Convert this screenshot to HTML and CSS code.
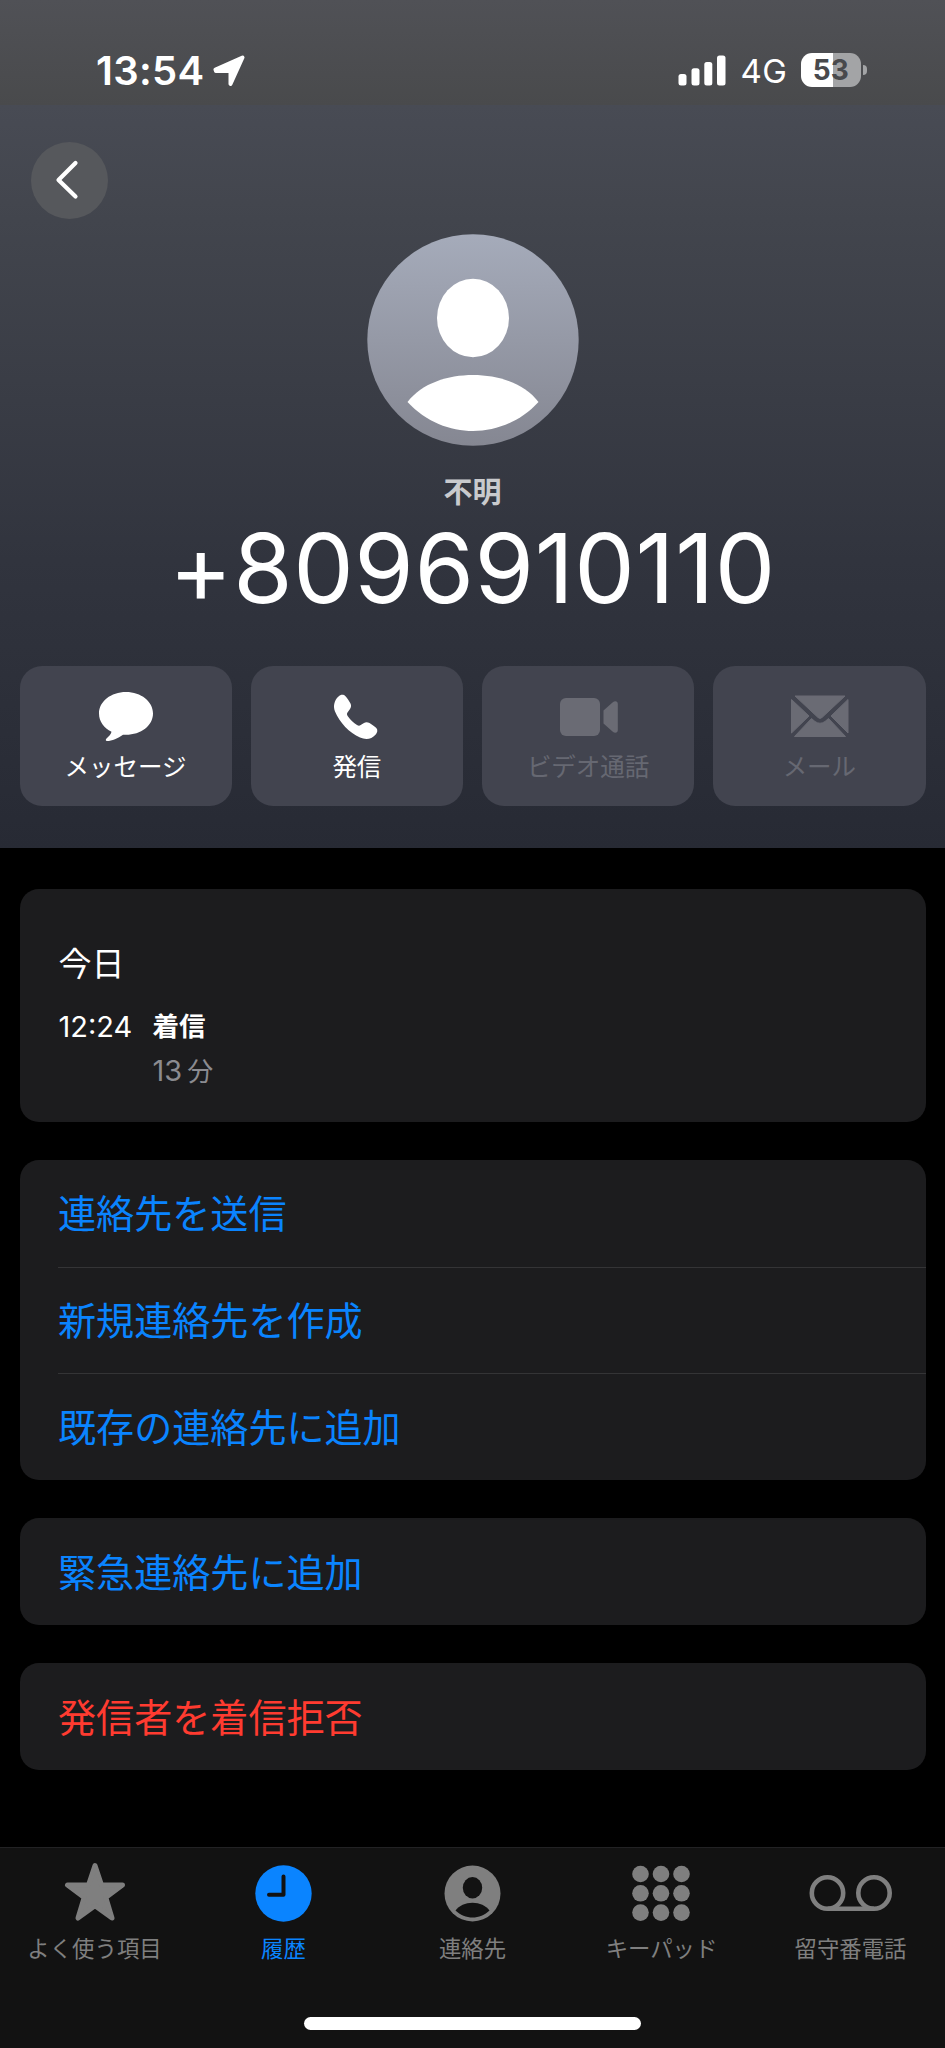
FILE: index.html
```html
<!DOCTYPE html>
<html lang="ja">
<head>
    <meta charset="UTF-8">
    <meta name="viewport" content="width=device-width, initial-scale=1.0">
    <title>履歴</title>
    <link rel="stylesheet" href="styles.css">
</head>
<body>

<div class="phone">
    <header class="hero">
        <div class="status-bar">
            <div class="status-left">
                <span class="clock">13:54</span>
                <svg class="location" width="33" height="32" viewBox="0 0 33 32">
                    <path d="M2.5 14.5 L29.5 2.5 L17.5 29 V16 H3 Z" fill="#fff" stroke="#fff" stroke-width="4" stroke-linejoin="round"/>
                </svg>
            </div>
            <div class="status-right">
                <svg class="signal" width="48" height="31" viewBox="0 0 48 31">
                    <rect x="0.5" y="19" width="8" height="11.5" rx="2.5" fill="#fff"/>
                    <rect x="13.5" y="13.3" width="8" height="17.2" rx="2.5" fill="#fff"/>
                    <rect x="26.3" y="7" width="8" height="23.5" rx="2.5" fill="#fff"/>
                    <rect x="39" y="0.5" width="8.5" height="30" rx="2.5" fill="#fff"/>
                </svg>
                <span class="network">4G</span>
                <div class="battery">53</div>
                <div class="battery-tip"></div>
            </div>
        </div>

        <button class="back">
            <svg width="24" height="40" viewBox="0 0 24 40">
                <path d="M20.5 3 L3.5 20 L20.5 36.5" fill="none" stroke="#fff" stroke-width="4.2" stroke-linecap="round" stroke-linejoin="round"/>
            </svg>
        </button>

        <div class="profile">
            <svg class="avatar" width="212" height="212" viewBox="0 0 212 212">
                <defs>
                    <linearGradient id="avatarFill" x1="0" y1="0" x2="0" y2="1">
                        <stop offset="0" stop-color="#a5abba"/>
                        <stop offset="1" stop-color="#858792"/>
                    </linearGradient>
                </defs>
                <circle cx="106" cy="106" r="105.7" fill="url(#avatarFill)"/>
                <ellipse cx="106" cy="84" rx="36" ry="39.3" fill="#fff"/>
                <path d="M40.5 168 C55 149 81 141 106 141 C131 141 157 149 171.5 168 C153 188 129 197 106 197 C83 197 59 188 40.5 168 Z" fill="#fff"/>
            </svg>
            <div class="name">不明</div>
            <h1 class="number">+8096910110</h1>
        </div>

        <div class="actions">
            <button class="action">
                <svg width="60" height="52" viewBox="0 0 60 52">
                    <path d="M30 1 C45 1 57 10.5 57 22.5 C57 34.5 45 43.8 30 43.8 L27 43.7 C22 47 16 50 11 50 C9.5 50 9.5 48.5 10.5 47.5 C13 45.5 15 43 15.5 40.8 C8 37 3 30.5 3 22.5 C3 10.5 15 1 30 1 Z" fill="#fff"/>
                </svg>
                <span>メッセージ</span>
            </button>
            <button class="action">
                <svg width="60" height="52" viewBox="1.5 0 60 52">
                    <path d="M13 5.5 C15 3.3 18 3 20 5.2 C22 7.6 24 10.5 25 12.5 C26 14.5 25.5 16.5 24.5 18 L22 21.5 C21 23 21.5 24 22.5 25.5 C25 29 28 32 31.5 34 C33 35 34 35 35.2 34 L38.5 32 C40 31 42 31 44 32 C46.5 33.5 49 35.2 50.8 37 C52.5 39 52 41.5 50 43.8 C46 48.5 40 49 34.5 46.5 C24 42 14 31.5 9.5 20.5 C7.5 15.5 8.5 9.5 13 5.5 Z" fill="#fff"/>
                </svg>
                <span>発信</span>
            </button>
            <button class="action disabled">
                <svg width="60" height="52" viewBox="-1.5 0 60 52">
                    <rect x="0.5" y="7" width="40" height="38" rx="6" fill="#6a6b74"/>
                    <path d="M44 19.5 L53 11.5 C55.5 9.5 58.3 10 58.3 13 V39 C58.3 42 55.5 42.5 53 40.5 L44 32.5 Z" fill="#6a6b74"/>
                </svg>
                <span>ビデオ通話</span>
            </button>
            <button class="action disabled">
                <svg width="60" height="52" viewBox="-1 0 60 52">
                    <path d="M5 5 H55 L32 26.5 Q30 28.3 28 26.5 Z M1.5 8.5 L19 25 L1.5 42 Z M58 8.5 L41 25 L58 42 Z M4.5 45.5 L21.5 27.5 L25 30.5 Q30 34 35 30.5 L38.5 27.5 L55.5 45.5 Z" fill="#6a6b74" stroke="#6a6b74" stroke-width="1" stroke-linejoin="round"/>
                </svg>
                <span>メール</span>
            </button>
        </div>
    </header>

    <main class="content">
        <section class="card history">
            <h2>今日</h2>
            <div class="call">
                <span class="call-time">12:24</span>
                <div>
                    <div class="call-type">着信</div>
                    <div class="call-length">13<span>分</span></div>
                </div>
            </div>
        </section>

        <section class="card list">
            <a class="row">連絡先を送信</a>
            <a class="row">新規連絡先を作成</a>
            <a class="row">既存の連絡先に追加</a>
        </section>

        <section class="card list">
            <a class="row">緊急連絡先に追加</a>
        </section>

        <section class="card list">
            <a class="row danger">発信者を着信拒否</a>
        </section>
    </main>

    <footer class="bottom">
        <nav class="tabs">
            <a class="tab">
                <svg width="64" height="60" viewBox="0 0 64 60">
                    <path d="M32 3.5 L38.5 23 H59.5 L42.8 35.5 L49 56 L32 43.8 L15 56 L21.2 35.5 L4.5 23 H25.5 Z" fill="currentColor" stroke="currentColor" stroke-width="5" stroke-linejoin="round"/>
                </svg>
                <span>よく使う項目</span>
            </a>
            <a class="tab active">
                <svg width="64" height="60" viewBox="0 0 64 60">
                    <circle cx="31.5" cy="31.5" r="28.2" fill="currentColor"/>
                    <path d="M31.5 14.5 V32.7 H17" fill="none" stroke="#121212" stroke-width="4" stroke-linecap="round" stroke-linejoin="round"/>
                </svg>
                <span>履歴</span>
            </a>
            <a class="tab">
                <svg width="64" height="60" viewBox="0 0 64 60">
                    <circle cx="31.5" cy="31.5" r="28" fill="currentColor"/>
                    <ellipse cx="31.5" cy="25.7" rx="9.7" ry="10.7" fill="#121212"/>
                    <path d="M14.5 48.5 C18 43.5 24.5 40.7 31.5 40.7 C38.5 40.7 45 43.5 48.5 48.5 C44 53 37.5 55.5 31.5 55.5 C25.5 55.5 19 53 14.5 48.5 Z" fill="#121212"/>
                </svg>
                <span>連絡先</span>
            </a>
            <a class="tab">
                <svg width="64" height="60" viewBox="1 0 64 60" fill="currentColor">
                    <circle cx="11.5" cy="12" r="8.3"/>
                    <circle cx="32" cy="12" r="8.3"/>
                    <circle cx="52.5" cy="12" r="8.3"/>
                    <circle cx="11.5" cy="31.3" r="8.3"/>
                    <circle cx="32" cy="31.3" r="8.3"/>
                    <circle cx="52.5" cy="31.3" r="8.3"/>
                    <circle cx="11.5" cy="50.6" r="8.3"/>
                    <circle cx="32" cy="50.6" r="8.3"/>
                    <circle cx="52.5" cy="50.6" r="8.3"/>
                </svg>
                <span>キーパッド</span>
            </a>
            <a class="tab">
                <svg width="84" height="60" viewBox="0 0 84 60" fill="none" stroke="currentColor" stroke-width="4.6">
                    <circle cx="18.5" cy="31" r="15.7"/>
                    <circle cx="65" cy="31" r="15.7"/>
                    <path d="M18.5 46.7 H65"/>
                </svg>
                <span>留守番電話</span>
            </a>
        </nav>
        <div class="home-indicator"></div>
    </footer>
</div>

</body>
</html>
```
FILE: styles.css
```css
* {
    box-sizing: border-box;
}
body {
    margin: 0;
    background-color: #000;
    color: #fff;
    font-family: Inter, "Noto Sans CJK JP", sans-serif;
}
.phone {
    width: 945px;
    height: 2048px;
    display: flex;
    flex-direction: column;
    overflow: hidden;
}
button {
    border: none;
    padding: 0;
    color: inherit;
    font-family: inherit;
}
svg {
    display: block;
}

/* header */
.hero {
    height: 848px;
    background: linear-gradient(#4d505b 0, #484b54 105px, #42454d 220px, #31343e 560px, #272a34 848px);
}
.status-bar {
    height: 105px;
    padding: 0 78px 0 96px;
    display: flex;
    justify-content: space-between;
    background: linear-gradient(#505156, #494a4c);
}
.status-left {
    display: flex;
    padding-top: 51px;
}
.clock {
    width: 117px;
    font-size: 40px;
    line-height: 40px;
    font-weight: 600;
    letter-spacing: 0.3px;
}
.location {
    margin-top: 4px;
}
.status-right {
    display: flex;
    padding-top: 53px;
}
.signal {
    margin-top: 2px;
}
.network {
    width: 60px;
    margin-left: 14.5px;
    font-size: 33px;
    line-height: 37px;
    font-weight: 400;
    letter-spacing: 0.5px;
}
.battery {
    width: 60.5px;
    height: 34px;
    border-radius: 11px;
    background: linear-gradient(90deg, #fff 32.5px, #a3a4a6 32.5px);
    color: #48494c;
    font-size: 28px;
    line-height: 35px;
    font-weight: 700;
    text-align: center;
}
.battery-tip {
    width: 4px;
    height: 10px;
    margin: 12px 0 0 2px;
    border-radius: 0 5px 5px 0;
    background-color: #a3a4a6;
}
.back {
    width: 77px;
    height: 77px;
    margin: 37px 0 0 31px;
    border-radius: 50%;
    background-color: #56585c;
    display: flex;
    align-items: center;
    justify-content: center;
}
.back svg {
    margin: 0 5px 2px 0;
}
.profile {
    margin-top: 15px;
    display: flex;
    flex-direction: column;
    align-items: center;
}
.name {
    margin-top: 27px;
    font-size: 29px;
    line-height: 40px;
    font-weight: 700;
    color: #c9cacd;
}
.number {
    margin: 5px 0 0;
    font-size: 96px;
    line-height: 100px;
    font-weight: 400;
    letter-spacing: 0.6px;
    white-space: nowrap;
}
.actions {
    margin-top: 48px;
    padding: 0 19.5px;
    display: grid;
    grid-template-columns: repeat(4, 1fr);
    gap: 19px;
}
.action {
    height: 140px;
    padding-top: 25px;
    border-radius: 22px;
    background-color: #42444f;
    display: flex;
    flex-direction: column;
    align-items: center;
    font-size: 24.5px;
    line-height: 30px;
}
.action span {
    margin-top: 9px;
}
.action.disabled {
    color: #666872;
}

/* cards */
.content {
    flex: 1;
    padding: 41px 19.5px 0;
}
.card {
    margin-bottom: 38.5px;
    border-radius: 19px;
    background-color: #1c1c1e;
}
.history {
    height: 232.5px;
    padding: 55px 39px 0;
}
.history h2 {
    margin: 0;
    font-size: 33px;
    line-height: 40px;
    font-weight: 400;
}
.call {
    margin-top: 21px;
    display: flex;
    font-size: 29px;
    line-height: 43.5px;
}
.call-time {
    width: 94px;
}
.call-type {
    font-size: 26.5px;
    font-weight: 700;
}
.call-length {
    color: #8b8b90;
}
.call-length span {
    margin-left: 5px;
    font-size: 26px;
}
.list {
    padding-left: 38.5px;
}
.row {
    height: 106.6px;
    padding-top: 2px;
    display: flex;
    align-items: center;
    font-size: 38.1px;
    line-height: 50px;
    color: #0a84ff;
}
.row + .row {
    border-top: 1.5px solid #343436;
}
.row.danger {
    color: #ff3b30;
}

/* tab bar */
.bottom {
    height: 201px;
    border-top: 1px solid #222224;
    background-color: #121212;
}
.tabs {
    height: 169px;
    padding-top: 14px;
    display: grid;
    grid-template-columns: repeat(5, 1fr);
}
.tab {
    display: flex;
    flex-direction: column;
    align-items: center;
    color: #7f7f7f;
    font-size: 22.4px;
    line-height: 30px;
}
.tab span {
    margin-top: 12px;
}
.tab.active {
    color: #0a84ff;
}
.home-indicator {
    width: 337px;
    height: 12.5px;
    margin: 0 auto;
    border-radius: 7px;
    background-color: #fff;
}
```
